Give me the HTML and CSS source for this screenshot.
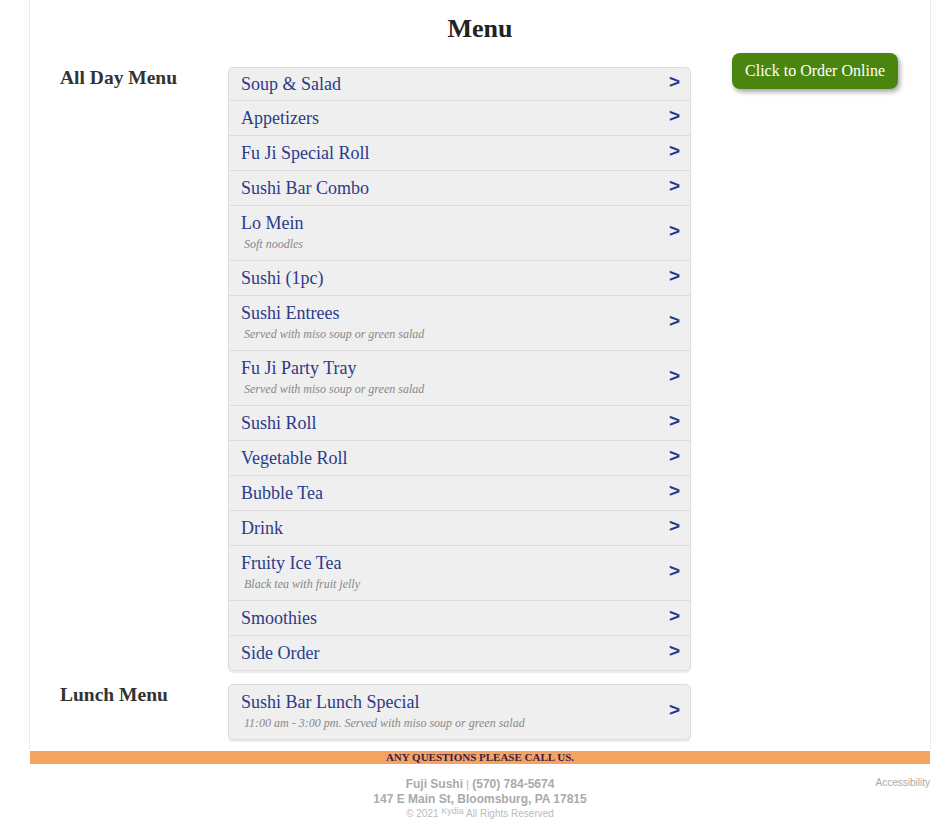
FILE: index.html
```html
<html>
<head>
<title>Menu - Fuji Sushi</title>
<link rel="stylesheet" href="styles.css">
</head>
<body>
<div class="page">
  <h1 class="title">Menu</h1>

  <div class="section first">
    <h2 class="label">All Day Menu</h2>
    <div class="list">
      <div class="row"><div class="txt"><div class="name">Soup &amp; Salad</div></div><span class="arrow">&gt;</span></div>
      <div class="row"><div class="txt"><div class="name">Appetizers</div></div><span class="arrow">&gt;</span></div>
      <div class="row"><div class="txt"><div class="name">Fu Ji Special Roll</div></div><span class="arrow">&gt;</span></div>
      <div class="row"><div class="txt"><div class="name">Sushi Bar Combo</div></div><span class="arrow">&gt;</span></div>
      <div class="row"><div class="txt"><div class="name">Lo Mein</div><div class="sub">Soft noodles</div></div><span class="arrow">&gt;</span></div>
      <div class="row"><div class="txt"><div class="name">Sushi (1pc)</div></div><span class="arrow">&gt;</span></div>
      <div class="row"><div class="txt"><div class="name">Sushi Entrees</div><div class="sub">Served with miso soup or green salad</div></div><span class="arrow">&gt;</span></div>
      <div class="row"><div class="txt"><div class="name">Fu Ji Party Tray</div><div class="sub">Served with miso soup or green salad</div></div><span class="arrow">&gt;</span></div>
      <div class="row"><div class="txt"><div class="name">Sushi Roll</div></div><span class="arrow">&gt;</span></div>
      <div class="row"><div class="txt"><div class="name">Vegetable Roll</div></div><span class="arrow">&gt;</span></div>
      <div class="row"><div class="txt"><div class="name">Bubble Tea</div></div><span class="arrow">&gt;</span></div>
      <div class="row"><div class="txt"><div class="name">Drink</div></div><span class="arrow">&gt;</span></div>
      <div class="row"><div class="txt"><div class="name">Fruity Ice Tea</div><div class="sub">Black tea with fruit jelly</div></div><span class="arrow">&gt;</span></div>
      <div class="row"><div class="txt"><div class="name">Smoothies</div></div><span class="arrow">&gt;</span></div>
      <div class="row"><div class="txt"><div class="name">Side Order</div></div><span class="arrow">&gt;</span></div>
    </div>
    <a class="order" href="#">Click to Order Online</a>
  </div>

  <div class="section">
    <h2 class="label">Lunch Menu</h2>
    <div class="list">
      <div class="row"><div class="txt"><div class="name">Sushi Bar Lunch Special</div><div class="sub">11:00 am - 3:00 pm. Served with miso soup or green salad</div></div><span class="arrow">&gt;</span></div>
    </div>
  </div>
</div>

<div class="band">ANY QUESTIONS PLEASE CALL US.</div>

<div class="footer">
  <div></div>
  <div class="info">
    <div class="line1">Fuji Sushi <span class="bar">|</span> (570) 784-5674</div>
    <div class="line2">147 E Main St, Bloomsburg, PA 17815</div>
    <div class="line3">&copy; 2021 <span class="kydia">Kydia</span> All Rights Reserved</div>
  </div>
  <div class="access">Accessibility</div>
</div>
</body>
</html>
```

FILE: styles.css
```css
body {
  margin: 0;
  background-color: #ffffff;
  font-family: "Liberation Serif", "Times New Roman", serif;
}

.page {
  margin-left: 29px;
  width: 900px;
  border-left: 1px solid #ececec;
  border-right: 1px solid #ececec;
  padding: 14px 0 10px 0;
}

.title {
  margin: 0;
  text-align: center;
  font-size: 26px;
  line-height: 30px;
  color: #222222;
}

.section {
  display: flex;
  align-items: flex-start;
  padding-left: 30px;
  margin-top: 13px;
}

.section.first {
  margin-top: 23px;
}

.label {
  margin: 0;
  width: 168px;
  font-size: 19.5px;
  line-height: 22px;
  color: #333333;
}

.list {
  width: 461px;
  background-color: #efefef;
  border: 1px solid #dcdcdc;
  border-radius: 5px;
  box-shadow: 0 2px 1px rgba(0, 0, 0, 0.08);
}

.row {
  display: flex;
  align-items: center;
  padding: 7px 10px 6px 12px;
  border-top: 1px solid #dddddd;
}

.row:first-child {
  border-top: none;
  padding-top: 6px;
  padding-bottom: 5px;
}

.row:only-child {
  padding-top: 7px;
  padding-bottom: 6px;
}

.txt {
  flex: 1;
}

.name {
  font-size: 18px;
  line-height: 21px;
  color: #2b3b8b;
}

.sub {
  font-size: 12px;
  line-height: 20px;
  font-style: italic;
  color: #888888;
  padding-left: 3px;
}

.arrow {
  font-family: "Liberation Sans", Arial, sans-serif;
  font-weight: bold;
  font-size: 19px;
  line-height: 14px;
  margin-bottom: 6px;
  color: #25378c;
}

.order {
  margin-left: 41px;
  margin-top: -14px;
  width: 166px;
  height: 36px;
  line-height: 35px;
  text-align: center;
  background-color: #4a860f;
  color: #ffffff;
  font-size: 16px;
  text-decoration: none;
  border-radius: 8px;
  box-shadow: 2px 3px 5px rgba(0, 0, 0, 0.35);
}

.band {
  margin-left: 30px;
  width: 900px;
  margin-top: 1px;
  height: 13px;
  line-height: 13px;
  background-color: #f4a460;
  text-align: center;
  font-size: 11px;
  font-weight: bold;
  color: #3b1c4c;
}

.footer {
  display: grid;
  grid-template-columns: 1fr auto 1fr;
  margin-left: 30px;
  width: 900px;
  padding-top: 13px;
  font-family: "Liberation Sans", Arial, sans-serif;
}

.info {
  text-align: center;
  color: #aaaaaa;
}

.line1, .line2 {
  font-size: 12px;
  line-height: 14px;
  font-weight: bold;
}

.bar {
  font-weight: normal;
  font-size: 10px;
}

.line3 {
  font-size: 10px;
  line-height: 16px;
  color: #bbbbbb;
}

.kydia {
  font-size: 9px;
  position: relative;
  top: -3px;
}

.access {
  text-align: right;
  font-size: 10px;
  color: #aaaaaa;
}
```
